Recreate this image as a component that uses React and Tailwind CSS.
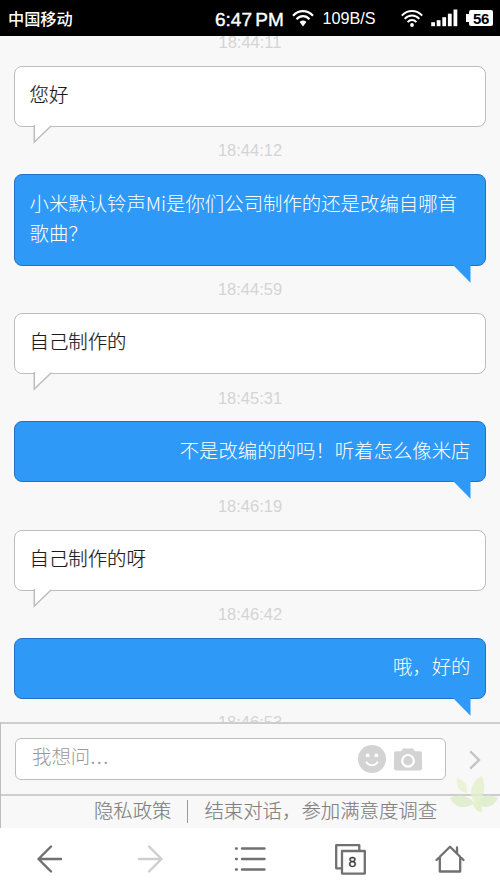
import React from 'react';

const messages = [
  { id: 1, from: 'agent', text: '您好', time: '18:44:12' },
  { id: 2, from: 'me', text: '小米默认铃声Mi是你们公司制作的还是改编自哪首歌曲？', time: '18:44:59', multiline: true },
  { id: 3, from: 'agent', text: '自己制作的', time: '18:45:31' },
  { id: 4, from: 'me', text: '不是改编的的吗！听着怎么像米店', time: '18:46:19' },
  { id: 5, from: 'agent', text: '自己制作的呀', time: '18:46:42' },
  { id: 6, from: 'me', text: '哦，好的', time: '18:46:53' },
];

const WifiIcon = ({ className }) => (
  <svg className={className} viewBox="0 0 22 17" fill="none" stroke="white" strokeWidth="2.1">
    <path d="M1 5.8C6.6 -0.4 15.4 -0.4 21 5.8" />
    <path d="M4.5 9.2C8.2 5.1 13.8 5.1 17.5 9.2" />
    <path d="M7.6 12L11 16.4L14.4 12C12.5 10 9.5 10 7.6 12Z" fill="white" stroke="none" />
  </svg>
);

const WifiArcsIcon = ({ className }) => (
  <svg className={className} viewBox="0 0 22 17" fill="none" stroke="white" strokeWidth="1.9">
    <path d="M0.8 5.6C6.5 -0.6 15.5 -0.6 21.2 5.6" />
    <path d="M3.7 8.9C7.8 4.4 14.2 4.4 18.3 8.9" />
    <path d="M6.6 12.1C9 9.3 13 9.3 15.4 12.1" />
    <circle cx="11" cy="15" r="1.9" fill="white" stroke="none" />
  </svg>
);

const StatusBar = () => (
  <header className="flex h-9 shrink-0 items-center bg-black pl-2 pr-[7px] text-white">
    <span className="w-[207px] font-['Noto_Sans_CJK_SC',sans-serif] text-[16.2px] font-medium leading-9">中国移动</span>
    <span className="w-[77px] whitespace-nowrap pt-0.5 text-[19px] font-medium leading-none [word-spacing:-2px] [-webkit-text-stroke:0.4px_white]">
      6:47 PM
    </span>
    <WifiIcon className="h-[17px] w-[22px]" />
    <span className="ml-[8.5px] w-[78.5px] whitespace-nowrap text-[16.2px] leading-none">109B/S</span>
    <WifiArcsIcon className="h-[17px] w-[22px]" />
    <svg className="ml-2 h-[18px] w-[27px]" viewBox="0 0 27 18" fill="white">
      <rect x="0.2" y="13.2" width="3.8" height="4" />
      <rect x="5.7" y="11.2" width="3.8" height="6" />
      <rect x="11.3" y="8.2" width="3.8" height="9" />
      <rect x="16.9" y="4.7" width="3.8" height="12.5" />
      <rect x="22.5" y="0.5" width="3.8" height="16.7" />
    </svg>
    <div className="ml-auto flex items-center">
      <div className="h-2 w-[3px] bg-white"></div>
      <div className="h-4 w-6 rounded-[2px] bg-white text-center text-[15px] font-bold leading-[17px] tracking-tight text-black">56</div>
    </div>
  </header>
);

const Bubble = ({ from, text, multiline }) => {
  const mine = from === 'me';
  return (
    <div
      className={`relative rounded-lg border px-[14.5px] pb-[16.1px] pt-[12.3px] font-['Noto_Sans_CJK_SC',sans-serif] text-[19.4px] font-light leading-[30.6px] ${
        mine
          ? 'border-[#2470c4] bg-[#2f99f7] text-white'
          : 'border-[#bdbdbd] bg-white text-[#1c1c1c] [-webkit-text-stroke:0.2px_#1c1c1c]'
      } ${mine && !multiline ? 'text-right' : 'text-left'}`}
    >
      {text}
      {mine ? (
        <svg className="absolute -bottom-[18px] right-[14px] h-[19px] w-[19px]" viewBox="0 0 19 19">
          <path d="M0 0H18.5V18.8Z" fill="#2f99f7" />
        </svg>
      ) : (
        <svg className="absolute -bottom-[18px] left-[18px] h-[19px] w-[20px]" viewBox="0 0 20 19">
          <path d="M1.3 0V17L18.3 0.7" fill="white" stroke="#bdbdbd" strokeWidth="1.5" />
        </svg>
      )}
    </div>
  );
};

const Time = ({ value }) => (
  <div className="flex h-[47.3px] items-center justify-center text-[16.5px] leading-none text-[#d4d4d4]">{value}</div>
);

const InputBar = () => (
  <div className="flex h-[72px] items-center border-b-2 border-[#cdcdcd] pl-3.5 pr-[19px]">
    <div className="flex h-[42px] w-[431px] items-center rounded-md border border-[#bdbdbd] bg-white pl-4 pr-[23px]">
      <span className="flex-1 pb-0.5 text-[19.4px] font-light text-[#999]">
        我想问<span className="tracking-[1px]">...</span>
      </span>
      <svg className="h-7 w-7" viewBox="0 0 28 28">
        <circle cx="14" cy="14" r="14" fill="#d3d3d3" />
        <circle cx="9.7" cy="10.4" r="1.9" fill="white" />
        <circle cx="18.3" cy="10.4" r="1.9" fill="white" />
        <path d="M8.5 17.3C11 21.2 17 21.2 19.5 17.3" fill="none" stroke="white" strokeWidth="1.9" strokeLinecap="round" />
      </svg>
      <svg className="ml-2 h-[23px] w-7" viewBox="0 0 28 23">
        <path d="M2 3.2H7L9 0.5H19L21 3.2H26Q28 3.2 28 5.2V20.5Q28 22.5 26 22.5H2Q0 22.5 0 20.5V5.2Q0 3.2 2 3.2Z" fill="#d3d3d3" />
        <circle cx="14" cy="12.8" r="5.8" fill="none" stroke="white" strokeWidth="2.2" />
      </svg>
    </div>
    <svg className="ml-auto mt-0.5 h-5 w-3" viewBox="0 0 12 20" fill="none" stroke="#c4c4c4" strokeWidth="2.4">
      <path d="M1.2 1.3L10 10L1.2 18.7" />
    </svg>
  </div>
);

const Lotus = () => (
  <svg className="absolute right-[2px] top-[52px] h-[37px] w-[48px] opacity-80" viewBox="0 0 48 37">
    <path d="M7 2C15 5 18 9 17 17C9 16 6 10 7 2Z" fill="#e6f3cd" />
    <path d="M0 22C7 18 18 18 24 27C17 33 5 33 0 22Z" fill="#dcecc5" />
    <path d="M48 22C41 18 31 18 25 27C31 33 43 33 48 22Z" fill="#dcecc5" />
    <path d="M31.5 0C36 8 36 19 26 28C17 19 21 5 31.5 0Z" fill="#e2f1cb" />
    <path d="M22.5 27C28 26 31 30 33 35.5C28 37 24 33 22.5 27Z" fill="#e0f1bf" />
  </svg>
);

const NavBar = () => (
  <nav className="flex h-[61px] items-center bg-white pl-[37px] text-[#707070]">
    <svg className="h-7 w-[26px]" viewBox="0 0 26 28" fill="none" stroke="currentColor" strokeWidth="2.4" strokeLinecap="round" strokeLinejoin="round">
      <path d="M24 14H1.5M14 1.5L1.5 14L14 26.5" />
    </svg>
    <svg className="ml-[74px] h-7 w-[26px] text-[#cecece]" viewBox="0 0 26 28" fill="none" stroke="currentColor" strokeWidth="2.4" strokeLinecap="round" strokeLinejoin="round">
      <path d="M2 14H24.5M12 1.5L24.5 14L12 26.5" />
    </svg>
    <svg className="ml-[71px] h-[26px] w-8" viewBox="0 0 32 26" stroke="currentColor" strokeWidth="2.4" strokeLinecap="round">
      <path d="M2 2.5H2.8M8 2.5H30.5M2 13H2.8M8 13H30.5M2 23.5H2.8M8 23.5H30.5" />
    </svg>
    <div className="relative ml-[67.5px] h-8 w-8">
      <svg className="h-8 w-8" viewBox="0 0 32 32" fill="none" stroke="currentColor" strokeWidth="2.3" strokeLinejoin="round">
        <path d="M7 25.3H2.2V2.2H25.3V7" />
        <rect x="8" y="8" width="22.8" height="22.6" />
      </svg>
      <span className="absolute left-[7px] top-[7px] w-6 text-center text-[14px] leading-6 text-[#333] [-webkit-text-stroke:0.3px_#333]">8</span>
    </div>
    <svg className="ml-[69.5px] h-7 w-[30px]" viewBox="0 0 30 28" fill="none" stroke="currentColor" strokeWidth="2.3" strokeLinecap="round" strokeLinejoin="round">
      <path d="M1.5 15L15 1.8L28.5 15M4.8 12V26.5H25.2V12M22 8V2.4" />
    </svg>
  </nav>
);

const App = () => {
  return (
    <div className="flex h-[889px] w-[500px] flex-col overflow-hidden bg-[#f8f8f8] font-['Liberation_Sans','Noto_Sans_CJK_SC',sans-serif]">
      <StatusBar />

      {/* Conversation */}
      <main className="h-[686px] shrink-0 overflow-hidden px-3.5">
        <div className="-mt-[17.3px]">
          <Time value="18:44:11" />
          {messages.map((m) => (
            <React.Fragment key={m.id}>
              <Bubble from={m.from} text={m.text} multiline={m.multiline} />
              <Time value={m.time} />
            </React.Fragment>
          ))}
        </div>
      </main>

      {/* Composer */}
      <section className="relative h-[106px] shrink-0 border-l border-t-2 border-[#cdcdcd] border-l-[#bdbdbd]">
        <InputBar />
        <div className="flex h-[30px] items-center justify-center pl-[34px] pr-1 text-[19.4px] font-light leading-[30px] text-[#808080] [-webkit-text-stroke:0.15px_#808080]">
          <span>隐私政策</span>
          <span className="mx-4 h-[23px] w-px bg-[#999]"></span>
          <span>结束对话，参加满意度调查</span>
        </div>
        <Lotus />
      </section>

      <NavBar />
    </div>
  );
};

export default App;
